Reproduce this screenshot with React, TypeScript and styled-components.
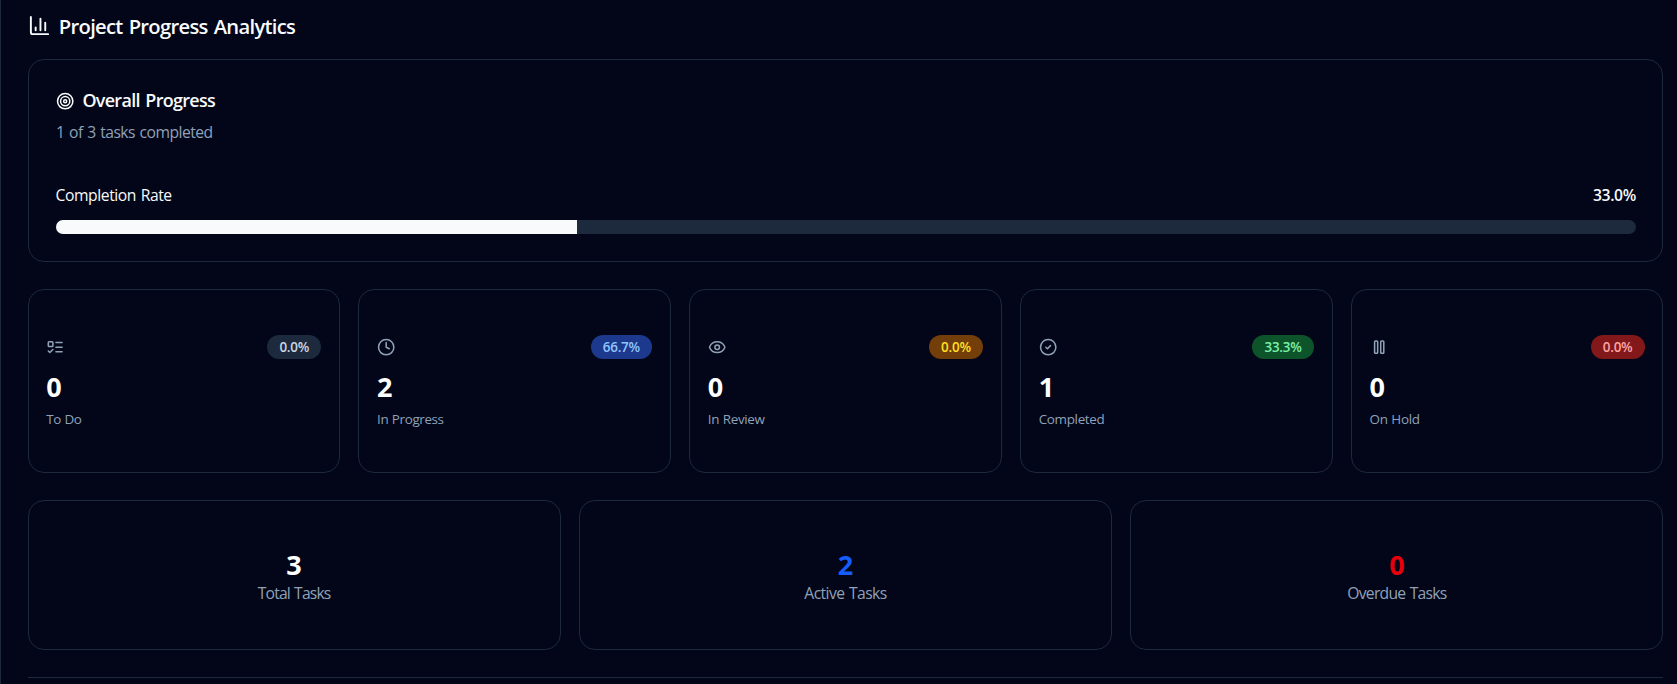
import React from "react";
import styled, { createGlobalStyle } from "styled-components";
import { CircleCheck, Clock, Eye, Target } from "lucide-react";

const GlobalStyle = createGlobalStyle`
  * { box-sizing: border-box; }
  body {
    margin: 0;
    background: #020618;
    color: #f8fafc;
    font-family: "Segoe UI", "Open Sans", "Noto Sans", sans-serif;
  }
`;

const Page = styled.main`
  display: flex;
  flex-direction: column;
  gap: 27px;
  height: 684px;
  overflow: hidden;
  padding: 0 13.6px 0 26.6px;
  border-left: 1px solid #1d293d;
`;

const Section = styled.section`
  display: flex;
  flex-direction: column;
`;

const PageHeader = styled.header`
  display: flex;
  align-items: flex-start;
  gap: 8.2px;
  height: 59px;
  padding-top: 14px;
`;

const PageTitle = styled.h2`
  margin: -4px 0 0;
  font-size: 20.2px;
  font-weight: 600;
  line-height: 32px;
  letter-spacing: -0.7px;
  word-spacing: 1.5px;
`;

const Card = styled.div`
  border: 1px solid #1d293d;
  border-radius: 16px;
  background: #020618;
`;

const OverviewCard = styled(Card)`
  height: 203px;
  padding: 27px 26.5px 27px 27.4px;
`;

const CardTitle = styled.div`
  display: flex;
  align-items: center;
  gap: 8px;
  height: 28px;
`;

const CardTitleText = styled.h3`
  margin: 0;
  padding-bottom: 2px;
  font-size: 17.95px;
  font-weight: 600;
  line-height: 26px;
  letter-spacing: -0.68px;
  word-spacing: 1.5px;
`;

const Description = styled.p`
  margin: 5px 0 0;
  color: #90a1b9;
  font-size: 15.7px;
  line-height: 24px;
  letter-spacing: -0.53px;
  word-spacing: 1px;
`;

const RateRow = styled.div`
  display: flex;
  justify-content: space-between;
  margin: 39px 0 13px;
  font-size: 15.7px;
  line-height: 24px;
`;

const RateLabel = styled.span`
  margin-left: -0.4px;
  letter-spacing: -0.44px;
  word-spacing: 1px;
`;

const RateValue = styled.span`
  font-weight: 600;
  letter-spacing: -0.35px;
`;

const Track = styled.div`
  height: 14px;
  overflow: hidden;
  border-radius: 7px;
  background: #1d293d;
`;

const Fill = styled.div`
  height: 100%;
  background: #f8fafc;
`;

const Grid = styled.div<{ $columns: number }>`
  display: grid;
  grid-template-columns: repeat(${(p) => p.$columns}, 1fr);
  gap: 18.4px;
`;

const StatusCard = styled(Card)`
  height: 184px;
  padding: 45px 17.8px 0 17.6px;
`;

const StatusTop = styled.div`
  display: flex;
  align-items: center;
  justify-content: space-between;
  height: 24px;
  color: #90a1b9;
`;

const Badge = styled.span<{ $bg: string; $fg: string }>`
  padding: 1px 12.2px 0;
  border-radius: 12px;
  background: ${(p) => p.$bg};
  color: ${(p) => p.$fg};
  font-size: 13.45px;
  font-weight: 600;
  line-height: 23px;
  letter-spacing: -0.25px;
`;

const Value = styled.div<{ $color?: string }>`
  color: ${(p) => p.$color ?? "#ffffff"};
  font-size: 27px;
  font-weight: 700;
  line-height: 36px;
`;

const StatusValue = styled(Value)`
  margin-top: 10px;
`;

const StatusLabel = styled.div<{ $tracking: number }>`
  margin-top: 4px;
  color: #90a1b9;
  font-size: 13.45px;
  line-height: 20px;
  letter-spacing: ${(p) => p.$tracking}px;
  word-spacing: 0.5px;
`;

const SummaryCard = styled(Card)`
  display: flex;
  flex-direction: column;
  align-items: center;
  height: 150px;
  padding-top: 46px;
`;

const SummaryLabel = styled.div<{ $tracking: number }>`
  margin-top: -1px;
  color: #90a1b9;
  font-size: 15.7px;
  line-height: 22px;
  letter-spacing: ${(p) => p.$tracking}px;
  word-spacing: 1px;
`;

const Divider = styled.hr`
  width: 100%;
  height: 1px;
  margin: 0;
  border: 0;
  background: #1d293d;
`;

const Glyph = ({ size, children }: { size: number; children: React.ReactNode }) => (
  <svg
    width={size}
    height={size}
    viewBox="0 0 24 24"
    fill="none"
    stroke="currentColor"
    strokeWidth={2}
    strokeLinecap="round"
    strokeLinejoin="round"
  >
    {children}
  </svg>
);

const ChartIcon = () => (
  <Glyph size={23}>
    <path d="M3 3v16a2 2 0 0 0 2 2h16" />
    <path d="M18 17V9" />
    <path d="M13 17V5" />
    <path d="M8 17v-3" />
  </Glyph>
);

const ListTodoIcon = () => (
  <Glyph size={18.4}>
    <rect x="3" y="5" width="6" height="6" rx="1" />
    <path d="m3 17 2 2 4-4" />
    <path d="M13 6h8" />
    <path d="M13 12h8" />
    <path d="M13 18h8" />
  </Glyph>
);

const PauseIcon = () => (
  <Glyph size={18.4}>
    <rect x="14" y="4" width="4" height="16" rx="1" />
    <rect x="6" y="4" width="4" height="16" rx="1" />
  </Glyph>
);

const statuses = [
  { label: "To Do", value: 0, share: "0.0%", icon: <ListTodoIcon />, bg: "#1d293d", fg: "#cad5e2", tracking: -0.4 },
  { label: "In Progress", value: 2, share: "66.7%", icon: <Clock size={18.4} />, bg: "#1c398e", fg: "#8ec5ff", tracking: -0.38 },
  { label: "In Review", value: 0, share: "0.0%", icon: <Eye size={18.4} />, bg: "#733e0a", fg: "#ffdf20", tracking: -0.36 },
  { label: "Completed", value: 1, share: "33.3%", icon: <CircleCheck size={18.4} />, bg: "#0d542b", fg: "#7bf1a8", tracking: -0.33 },
  { label: "On Hold", value: 0, share: "0.0%", icon: <PauseIcon />, bg: "#82181a", fg: "#ffa2a2", tracking: -0.3 },
];

const summaries = [
  { label: "Total Tasks", value: 3, color: "#ffffff", tracking: -0.85 },
  { label: "Active Tasks", value: 2, color: "#155dfc", tracking: -0.57 },
  { label: "Overdue Tasks", value: 0, color: "#e7000b", tracking: -0.74 },
];

export default function App() {
  const completion = 33;
  return (
    <>
      <GlobalStyle />
      <Page>
        <Section>
          <PageHeader>
            <ChartIcon />
            <PageTitle>Project Progress Analytics</PageTitle>
          </PageHeader>
          <OverviewCard>
            <CardTitle>
              <Target size={18.4} />
              <CardTitleText>Overall Progress</CardTitleText>
            </CardTitle>
            <Description>1 of 3 tasks completed</Description>
            <RateRow>
              <RateLabel>Completion Rate</RateLabel>
              <RateValue>{completion.toFixed(1)}%</RateValue>
            </RateRow>
            <Track>
              <Fill style={{ width: `${completion}%` }} />
            </Track>
          </OverviewCard>
        </Section>
        <Grid $columns={5}>
          {statuses.map((s) => (
            <StatusCard key={s.label}>
              <StatusTop>
                {s.icon}
                <Badge $bg={s.bg} $fg={s.fg}>{s.share}</Badge>
              </StatusTop>
              <StatusValue>{s.value}</StatusValue>
              <StatusLabel $tracking={s.tracking}>{s.label}</StatusLabel>
            </StatusCard>
          ))}
        </Grid>
        <Grid $columns={3}>
          {summaries.map((s) => (
            <SummaryCard key={s.label}>
              <Value $color={s.color}>{s.value}</Value>
              <SummaryLabel $tracking={s.tracking}>{s.label}</SummaryLabel>
            </SummaryCard>
          ))}
        </Grid>
        <Divider />
      </Page>
    </>
  );
}
